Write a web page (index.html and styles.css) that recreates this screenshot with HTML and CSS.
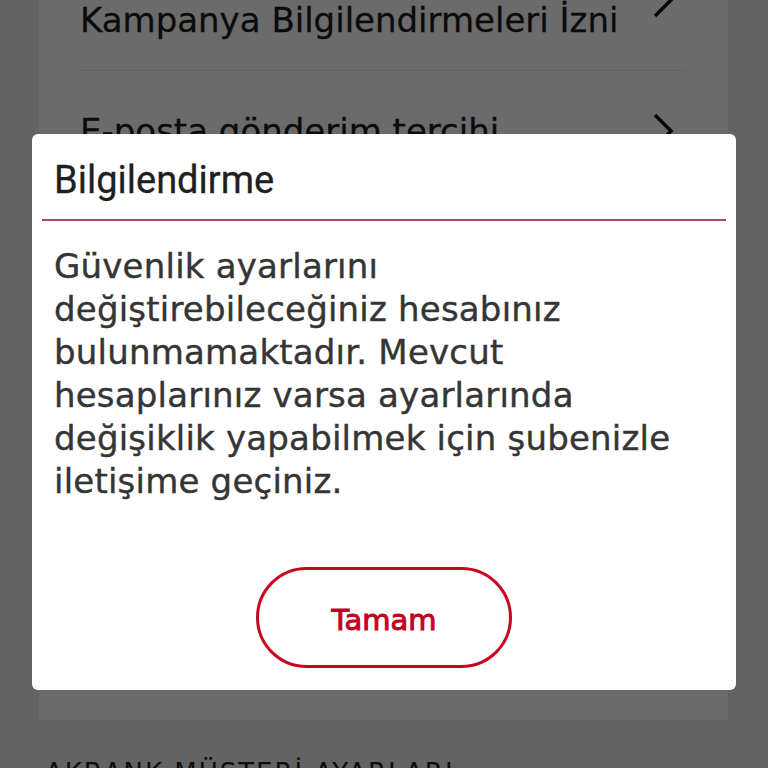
FILE: index.html
```html
<!DOCTYPE html>
<html lang="tr">
  <head>
    <meta charset="UTF-8" />
    <meta name="viewport" content="width=device-width, initial-scale=1.0" />
    <link rel="stylesheet" href="styles.css">
  </head>
  <body>
    <div class="page">
      <div class="settings-card">
        <div class="row">
          <div class="row-label">Ticari Elektronik İleti ve<br />Kampanya Bilgilendirmeleri İzni</div>
          <svg class="chevron" viewBox="0 0 24 36"><path d="M4 2 L20 18 L4 34" /></svg>
        </div>
        <div class="row">
          <div class="row-label">E-posta gönderim tercihi</div>
          <svg class="chevron" viewBox="0 0 24 36"><path d="M4 2 L20 18 L4 34" /></svg>
        </div>
        <div class="row">
          <div class="row-label">SMS gönderim tercihi</div>
          <svg class="chevron" viewBox="0 0 24 36"><path d="M4 2 L20 18 L4 34" /></svg>
        </div>
      </div>
      <h2 class="section-title">AKBANK MÜŞTERİ AYARLARI</h2>
    </div>

    <div class="overlay"></div>

    <div class="dialog">
      <div class="dialog-header">
        <h1>Bilgilendirme</h1>
      </div>
      <p class="dialog-text">
        Güvenlik ayarlarını<br />
        değiştirebileceğiniz hesabınız<br />
        bulunmamaktadır. Mevcut<br />
        hesaplarınız varsa ayarlarında<br />
        değişiklik yapabilmek için şubenizle<br />
        iletişime geçiniz.
      </p>
      <div class="dialog-actions">
        <button type="button">Tamam</button>
      </div>
    </div>
  </body>
</html>
```

FILE: styles.css
```css
* {
  margin: 0;
  padding: 0;
  box-sizing: border-box;
}

body {
  width: 768px;
  height: 768px;
  overflow: hidden;
  background: #ececec;
  font-family: "DejaVu Sans", sans-serif;
  color: #222;
}

.page {
  margin-top: -80px;
}

.settings-card {
  background: #fff;
  margin: 0 40px 0 39px;
  padding: 0 41px;
  height: 800px;
  overflow: hidden;
}

.row {
  display: flex;
  align-items: center;
  justify-content: space-between;
  padding: 40px 0 30px;
  border-bottom: 1px solid #ececec;
}

.row-label {
  font-size: 34px;
  line-height: 40px;
  color: #1c1c1c;
  -webkit-text-stroke: 0.3px #1c1c1c;
}

.chevron {
  width: 24px;
  height: 36px;
  margin-right: 12px;
  flex-shrink: 0;
}

.chevron path {
  fill: none;
  stroke: #111;
  stroke-width: 3.5;
}

.section-title {
  margin: 38px 0 0 45px;
  font-size: 26px;
  font-weight: normal;
  letter-spacing: 2px;
  color: #222;
}

.overlay {
  position: fixed;
  inset: 0;
  background: rgba(0, 0, 0, 0.58);
}

.dialog {
  position: fixed;
  left: 32px;
  top: 134px;
  width: 704px;
  height: 556px;
  background: #fff;
  border-radius: 6px;
  display: flex;
  flex-direction: column;
}

.dialog-header {
  height: 87px;
  margin: 0 10px;
  padding: 6px 12px 0;
  display: flex;
  align-items: center;
  border-bottom: 2px solid #b3475a;
}

.dialog-header h1 {
  font-family: Roboto, sans-serif;
  font-size: 38px;
  font-weight: normal;
  color: #1f1f1f;
  -webkit-text-stroke: 0.3px #1f1f1f;
}

.dialog-text {
  padding: 24px 22px 0;
  font-size: 34px;
  line-height: 43px;
  letter-spacing: 0.2px;
  color: #353535;
  -webkit-text-stroke: 0.4px #353535;
}

.dialog-actions {
  margin-top: auto;
  padding-bottom: 22px;
  display: flex;
  justify-content: center;
}

.dialog-actions button {
  width: 256px;
  height: 101px;
  padding-top: 4px;
  border: 3px solid #c9061f;
  border-radius: 51px;
  background: #fff;
  color: #c4001c;
  font-family: "DejaVu Sans", sans-serif;
  font-size: 29px;
  font-weight: normal;
  -webkit-text-stroke: 1px #c4001c;
  cursor: pointer;
}
```
